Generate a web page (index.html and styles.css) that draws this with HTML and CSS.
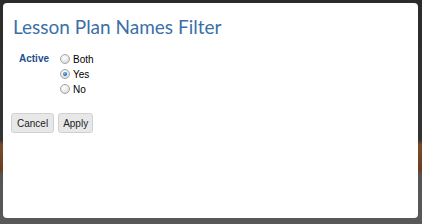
FILE: index.html
```html
<!DOCTYPE html>
<html>
<head>
<meta charset="utf-8">
<link rel="stylesheet" href="styles.css">
</head>
<body>
<div class="dialog">
  <h1 class="title">Lesson Plan Names Filter</h1>
  <div class="field">
    <div class="label">Active</div>
    <div class="options">
      <label class="opt"><span class="radio"></span>Both</label>
      <label class="opt"><span class="radio checked"></span>Yes</label>
      <label class="opt"><span class="radio"></span>No</label>
    </div>
  </div>
  <div class="actions">
    <button class="btn">Cancel</button>
    <button class="btn">Apply</button>
  </div>
</div>
</body>
</html>
```
FILE: styles.css
```css
html, body {
  margin: 0;
  padding: 0;
  width: 422px;
  height: 224px;
  overflow: hidden;
}
body {
  background: linear-gradient(to bottom, #2b2b2b 0px, #333 140px, #7a4a2a 145px, #6a3f24 170px, #555 175px, #585858 224px);
  padding: 3px 4px 0 3px;
  box-sizing: border-box;
}
.dialog {
  background: #fff;
  width: 415px;
  height: 215px;
  border-radius: 4px;
  box-sizing: border-box;
  padding: 12px 8px 0 8px;
  font-family: "Liberation Sans", Arial, sans-serif;
}
.title {
  margin: 0 0 0 2px;
  font-family: Lato, "Segoe UI", sans-serif;
  font-weight: 400;
  font-size: 19px;
  line-height: 24px;
  color: #3b6fa8;
}
.field {
  display: flex;
  margin: 14px 0 0 8px;
}
.label {
  width: 41px;
  font-weight: bold;
  font-size: 10px;
  color: #1e4f8c;
}
.options {
  display: flex;
  flex-direction: column;
  gap: 3px;
}
.opt {
  display: flex;
  align-items: center;
  font-size: 10px;
  color: #000;
  height: 12px;
}
.radio {
  width: 10px;
  height: 10px;
  border-radius: 50%;
  border: 1px solid #a4a4a4;
  box-sizing: border-box;
  background: radial-gradient(circle at 40% 35%, #fff 0, #ececec 45%, #cdcdcd 100%);
  margin-right: 3px;
  position: relative;
}
.radio.checked::after {
  content: "";
  position: absolute;
  left: 2px;
  top: 2px;
  width: 4px;
  height: 4px;
  border-radius: 50%;
  background: radial-gradient(circle at 40% 35%, #7cc0f0 0, #1a6fc0 60%, #0d4a8a 100%);
}
.actions {
  display: flex;
  gap: 4px;
  margin-top: 18px;
}
.btn {
  font-family: "Liberation Sans", Arial, sans-serif;
  font-size: 10px;
  color: #222;
  background: #e8e8e8;
  border: 1px solid #d0d0d0;
  border-radius: 3px;
  height: 20px;
  padding: 0 5px;
}
.btn + .btn {
  padding: 0 4px;
}
```
